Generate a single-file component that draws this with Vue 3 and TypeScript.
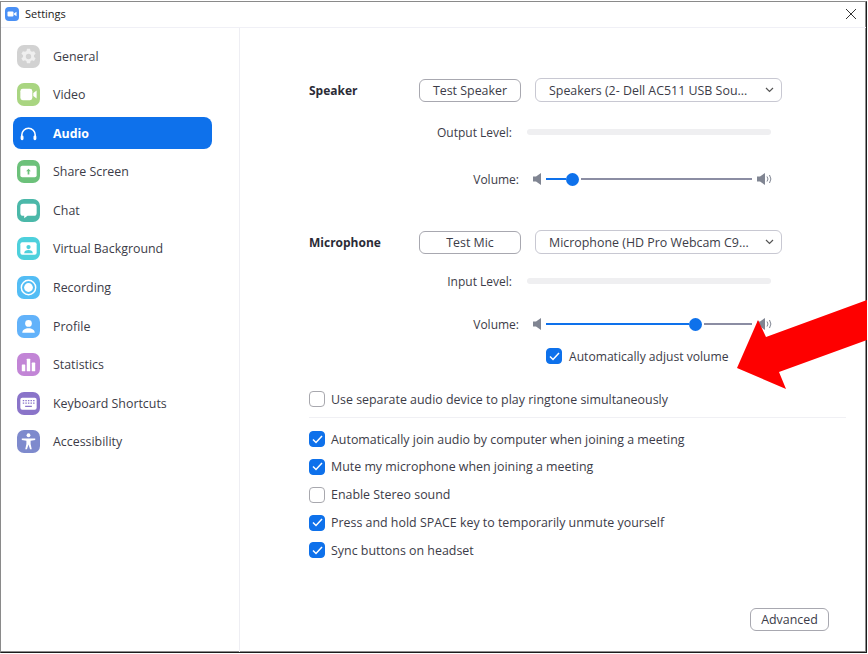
<script setup lang="ts">
interface Nav { label: string; color: string; icon: string; active?: boolean }
const nav: Nav[] = [
  { label: 'General', color: '#d2d2d2', icon: 'gear' },
  { label: 'Video', color: '#a9d581', icon: 'video' },
  { label: 'Audio', color: 'transparent', icon: 'audio', active: true },
  { label: 'Share Screen', color: '#6cc17a', icon: 'share' },
  { label: 'Chat', color: '#4bb8a9', icon: 'chat' },
  { label: 'Virtual Background', color: '#4dd0dc', icon: 'vb' },
  { label: 'Recording', color: '#53bdf5', icon: 'rec' },
  { label: 'Profile', color: '#62b2fa', icon: 'profile' },
  { label: 'Statistics', color: '#c285d6', icon: 'stats' },
  { label: 'Keyboard Shortcuts', color: '#8a74c9', icon: 'keys' },
  { label: 'Accessibility', color: '#7e8acd', icon: 'access' },
]
const opts = [
  { label: 'Automatically join audio by computer when joining a meeting', on: true },
  { label: 'Mute my microphone when joining a meeting', on: true },
  { label: 'Enable Stereo sound', on: false },
  { label: 'Press and hold SPACE key to temporarily unmute yourself', on: true },
  { label: 'Sync buttons on headset', on: true },
]
</script>

<template>
  <div class="window">
    <header class="titlebar">
      <svg class="logo" width="14" height="14" viewBox="0 0 14 14">
        <rect width="14" height="14" rx="4" fill="#4a90f5" />
        <rect x="2.500" y="4.500" width="6" height="5" rx="1" fill="#fff" />
        <path d="M9 6.500 11.500 4.800v4.400L9 7.500z" fill="#fff" />
      </svg>
      <span class="title">Settings</span>
      <svg class="close" width="12" height="12" viewBox="0 0 12 12">
        <path d="M1 1l10 10M11 1 1 11" stroke="#333" stroke-width="1" fill="none" />
      </svg>
    </header>
    <div class="body">
      <aside class="sidebar">
        <div v-for="n in nav" :key="n.label" class="nav" :class="{ active: n.active }">
          <span class="tile" :style="{ background: n.color }">
            <svg width="24" height="24" viewBox="0 0 24 24" fill="#fff">
              <template v-if="n.icon === 'gear'">
                <path fill-rule="evenodd" d="M10.400 4h3.200l.5 2.200 1.500.9 2.200-.7 1.600 2.800-1.700 1.500v1.700l1.700 1.500-1.600 2.800-2.200-.7-1.500.9-.5 2.100h-3.200l-.5-2.100-1.500-.9-2.200.7-1.600-2.800 1.700-1.500v-1.700L4.600 9.200l1.600-2.800 2.200.7 1.500-.9zM12 9.200a2.800 2.800 0 1 0 0 5.600 2.800 2.800 0 0 0 0-5.600z" fill="#efefef" />
              </template>
              <template v-else-if="n.icon === 'video'">
                <rect x="3.500" y="6" width="12.500" height="12" rx="2.500" />
                <path d="M17 10.500 20.500 7.800v8.400L17 13.500z" />
              </template>
              <template v-else-if="n.icon === 'audio'">
                <path d="M5 17v-3.500a7 7 0 0 1 14 0V17" fill="none" stroke="#fff" stroke-width="1.600" />
                <rect x="3.800" y="14" width="3" height="5" rx="1.400" />
                <rect x="17.200" y="14" width="3" height="5" rx="1.400" />
              </template>
              <template v-else-if="n.icon === 'share'">
                <rect x="3.500" y="6" width="17" height="12" rx="2" />
                <path d="M12 9l2.500 2.700h-1.600V15h-1.800v-3.300H9.500z" fill="#6cc17a" />
              </template>
              <template v-else-if="n.icon === 'chat'">
                <path d="M6.500 5h11A3 3 0 0 1 20.500 8v6.500a3 3 0 0 1-3 3H11l-3.500 2.500V17.500h-1a3 3 0 0 1-3-3V8a3 3 0 0 1 3-3z" />
              </template>
              <template v-else-if="n.icon === 'vb'">
                <rect x="3.500" y="5.500" width="17" height="13" rx="2" />
                <circle cx="12" cy="10.500" r="2.200" fill="#4dd0dc" />
                <path d="M7.500 17c0-2.500 2-3.500 4.500-3.500s4.500 1 4.500 3.500z" fill="#4dd0dc" />
              </template>
              <template v-else-if="n.icon === 'rec'">
                <circle cx="12" cy="12" r="7.500" fill="none" stroke="#fff" stroke-width="1.500" />
                <circle cx="12" cy="12" r="4.600" />
              </template>
              <template v-else-if="n.icon === 'profile'">
                <circle cx="12" cy="8.800" r="3.500" />
                <path d="M5.500 18.500c0-3.200 3-4.800 6.500-4.800s6.500 1.600 6.500 4.800z" />
              </template>
              <template v-else-if="n.icon === 'stats'">
                <rect x="5" y="12" width="3.600" height="7" rx=".6" />
                <rect x="10.200" y="6" width="3.600" height="13" rx=".6" />
                <rect x="15.400" y="10" width="3.600" height="9" rx=".6" />
              </template>
              <template v-else-if="n.icon === 'keys'">
                <rect x="3.500" y="6" width="17" height="12.500" rx="2" />
                <path d="M6 9h1.500M8.700 9h1.500M11.400 9h1.500M14.100 9h1.500M16.800 9h1.500M6 11.700h1.500M8.700 11.700h1.500M11.400 11.700h1.500M14.100 11.700h1.500M16.800 11.700h1.500M8.500 15h7" stroke="#8a74c9" stroke-width="1.300" fill="none" />
              </template>
              <template v-else-if="n.icon === 'access'">
                <circle cx="12" cy="5.500" r="2" />
                <path d="M5 8.800h14v1.700l-4.800.8v3.200l1.200 5.500h-1.800L12 15.200l-1.600 4.800H8.600l1.200-5.500v-3.200L5 10.500z" />
              </template>
            </svg>
          </span>
          <span class="nav-label">{{ n.label }}</span>
        </div>
      </aside>

      <main class="content">
        <section class="row r-speaker">
          <strong class="heading">Speaker</strong>
          <button class="btn test">Test Speaker</button>
          <div class="select">
            <span>Speakers (2- Dell AC511 USB Sou...</span>
            <svg width="9" height="6" viewBox="0 0 9 6"><path d="M1 1l3.500 3.500L8 1" stroke="#555" stroke-width="1.200" fill="none" /></svg>
          </div>
        </section>
        <section class="level r-out">
          <span class="lbl">Output Level:</span>
          <span class="meter"></span>
        </section>
        <section class="vol r-vol1">
          <span class="lbl">Volume:</span>
          <svg class="spk" width="10" height="12" viewBox="0 0 10 12"><path d="M0 3.500h3L8 0v12L3 8.500H0z" fill="#808592" /></svg>
          <div class="slider">
            <span class="fill" :style="{ width: '20px' }"></span>
            <span class="knob"></span>
            <span class="rest"></span>
          </div>
          <svg class="spk2" width="16" height="12" viewBox="0 0 16 12"><path d="M0 3.500h3L8 0v12L3 8.500H0z" fill="#808592" /><path d="M10 3.500a4 4 0 0 1 0 5M12.500 2a7 7 0 0 1 0 8" stroke="#808592" fill="none" /></svg>
        </section>

        <section class="row r-mic">
          <strong class="heading">Microphone</strong>
          <button class="btn test">Test Mic</button>
          <div class="select">
            <span>Microphone (HD Pro Webcam C9...</span>
            <svg width="9" height="6" viewBox="0 0 9 6"><path d="M1 1l3.500 3.500L8 1" stroke="#555" stroke-width="1.200" fill="none" /></svg>
          </div>
        </section>
        <section class="level r-in">
          <span class="lbl">Input Level:</span>
          <span class="meter"></span>
        </section>
        <section class="vol r-vol2">
          <span class="lbl">Volume:</span>
          <svg class="spk" width="10" height="12" viewBox="0 0 10 12"><path d="M0 3.500h3L8 0v12L3 8.500H0z" fill="#808592" /></svg>
          <div class="slider">
            <span class="fill" :style="{ width: '143px' }"></span>
            <span class="knob"></span>
            <span class="rest"></span>
          </div>
          <svg class="spk2" width="16" height="12" viewBox="0 0 16 12"><path d="M0 3.500h3L8 0v12L3 8.500H0z" fill="#808592" /><path d="M10 3.500a4 4 0 0 1 0 5M12.500 2a7 7 0 0 1 0 8" stroke="#808592" fill="none" /></svg>
        </section>
        <label class="check auto">
          <span class="box on"><svg width="11" height="9" viewBox="0 0 11 9"><path d="M1 4.500 4 7.500 10 1" stroke="#fff" stroke-width="1.500" fill="none" /></svg></span>
          Automatically adjust volume
        </label>

        <label class="check separate">
          <span class="box"></span>
          Use separate audio device to play ringtone simultaneously
        </label>
        <div class="divider"></div>
        <div class="opts">
          <label v-for="o in opts" :key="o.label" class="check">
            <span class="box" :class="{ on: o.on }"><svg v-if="o.on" width="11" height="9" viewBox="0 0 11 9"><path d="M1 4.500 4 7.500 10 1" stroke="#fff" stroke-width="1.500" fill="none" /></svg></span>
            {{ o.label }}
          </label>
        </div>
        <div class="footer"><button class="btn adv">Advanced</button></div>
      </main>
    </div>
    <svg class="arrow" width="867" height="654" viewBox="0 0 867 654">
      <path d="M737 368 758 320 766 337 867 300V340L779 372 786 389Z" fill="#fe0000" />
    </svg>
  </div>
</template>

<style>
html, body { margin: 0; background: #fff; }
</style>

<style scoped>
.window {
  position: relative;
  width: 867px;
  height: 652px;
  margin-top: 1px;
  box-sizing: border-box;
  background: #fff;
  border-top: 1px solid #8a8a8a;
  border-left: 1px solid #8a8a8a;
  border-right: 1px solid #1c1c1c;
  border-bottom: 1px solid #1c1c1c;
  box-shadow: inset -1px -1px 0 #8c8c8c;
  display: flex;
  flex-direction: column;
  font-family: "Open Sans", "Noto Sans", sans-serif;
  font-size: 12.42px;
  color: #3c3c48;
}
.titlebar {
  height: 25px;
  box-sizing: content-box;
  flex: none;
  display: flex;
  align-items: center;
  padding: 0 9px 0 4px;
  border-bottom: 1px solid #f0f0f6;
  gap: 6px;
}
.logo { margin-top: -2px; }
.title { font-size: 11px; color: #222; margin-top: -3px; }
.close { margin-left: auto; margin-top: -1px; }
.body { flex: 1; display: flex; min-height: 0; }
.sidebar {
  width: 239px;
  flex: none;
  box-sizing: border-box;
  border-right: 1px solid #eeeef3;
  padding: 12px 27px 0 12px;
  display: flex;
  flex-direction: column;
  gap: 6.6px;
}
.nav {
  height: 32px;
  display: flex;
  align-items: center;
  border-radius: 8px;
  padding-left: 4px;
  gap: 13px;
  font-size: 12.4px;
}
.nav.active { background: #0e71eb; color: #fff; font-weight: 700; }
.tile {
  width: 23px;
  height: 23px;
  border-radius: 7px;
  display: flex;
  align-items: center;
  justify-content: center;
  flex: none;
}
.tile svg { width: 23px; height: 23px; }
.content {
  flex: 1;
  padding: 0 20px 0 69px;
  min-width: 0;
  display: flex;
  flex-direction: column;
}
.row { display: flex; align-items: center; height: 24px; }
.heading { width: 110px; color: #2b2b36; font-weight: 700; font-size: 12px; }
.btn {
  font: inherit;
  color: inherit;
  background: #fff;
  border: 1px solid #a8a8b0;
  border-radius: 6px;
  padding: 0;
  height: 23px;
}
.test { width: 102px; margin-right: 14px; }
.select {
  width: 247px;
  height: 24px;
  box-sizing: border-box;
  border: 1px solid #c8c8d2;
  border-radius: 6px;
  padding: 0 7px 0 13px;
  display: flex;
  align-items: center;
  justify-content: space-between;
}
.r-speaker { margin-top: 50px; }
.level { display: flex; align-items: center; height: 18px; }
.r-out { margin-top: 21px; }
.r-in { margin-top: 18px; }
.level .lbl { width: 203px; text-align: right; font-size: 12px; }
.meter {
  width: 244px;
  height: 6px;
  border-radius: 3px;
  background: #efeff1;
  margin-left: 15px;
}
.vol { display: flex; align-items: center; height: 18px; }
.r-vol1 { margin-top: 29px; }
.r-vol2 { margin-top: 25px; }
.vol .lbl { width: 210px; text-align: right; font-size: 12px; }
.spk { margin-left: 14px; flex: none; }
.slider {
  width: 206px;
  margin-left: 3px;
  display: flex;
  align-items: center;
  flex: none;
}
.fill { height: 2px; background: #0e71eb; flex: none; }
.knob {
  width: 13px;
  height: 13px;
  border-radius: 50%;
  background: #0e71eb;
  flex: none;
}
.rest { height: 2px; flex: 1; background: #8b8da3; margin-left: 2px; }
.spk2 { margin-left: 5px; flex: none; }
.r-mic { margin-top: 42px; }
.check { display: flex; align-items: center; height: 18px; gap: 6px; }
.box {
  width: 16px;
  height: 16px;
  box-sizing: border-box;
  border: 1px solid #a8a8ae;
  border-radius: 4px;
  display: flex;
  align-items: center;
  justify-content: center;
  flex: none;
  background: #fff;
}
.box.on { background: #0e71eb; border-color: #0e71eb; }
.auto { margin: 14px 0 0 237px; font-size: 12.12px; gap: 7px; }
.separate { margin-top: 25px; }
.divider { height: 1px; background: #f0f0f4; margin-top: 9px; }
.opts {
  margin-top: 12px;
  display: flex;
  flex-direction: column;
  gap: 9.850px;
}
.footer { margin-top: auto; padding: 0 17px 21px 0; display: flex; justify-content: flex-end; }
.adv { width: 79px; }
.arrow { position: absolute; left: -1px; top: -2px; pointer-events: none; }
</style>
